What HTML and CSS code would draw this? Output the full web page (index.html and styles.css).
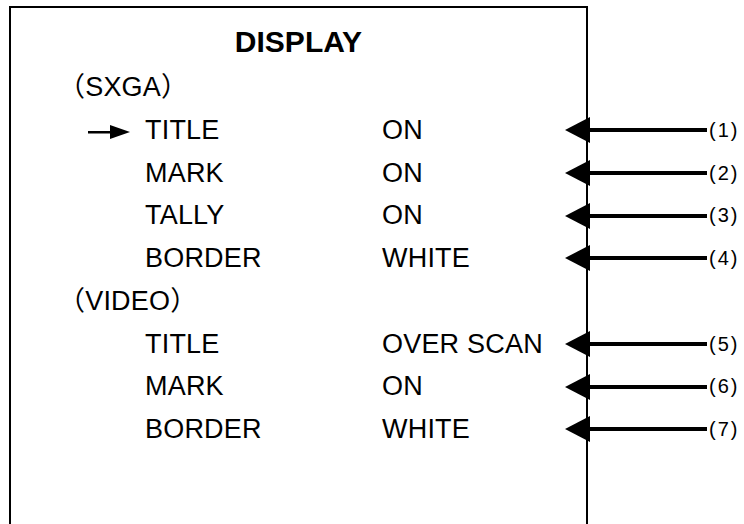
FILE: index.html
```html
<!DOCTYPE html>
<html lang="en">
<head>
    <meta charset="UTF-8">
    <title>Display Menu</title>
    <link rel="stylesheet" href="styles.css">
</head>
<body>
    <div class="panel">
        <h1 class="title">DISPLAY</h1>

        <ul class="menu">
            <li class="group">（SXGA）</li>
            <li class="row">
                <span class="marker">
                    <svg width="42" height="16" viewBox="0 0 42 16"><rect x="0" y="7" width="26" height="2.5" fill="#000"/><polygon points="22,1 42,8 22,15" fill="#000"/></svg>
                </span>
                <span class="label">TITLE</span>
                <span class="value">ON</span>
                <span class="callout"><svg width="142" height="26" viewBox="0 0 142 26"><polygon points="0,13 25,0 25,26" fill="#000"/><rect x="24" y="11" width="118" height="4" fill="#000"/></svg><span class="num">(1)</span></span>
            </li>
            <li class="row">
                <span class="marker"></span>
                <span class="label">MARK</span>
                <span class="value">ON</span>
                <span class="callout"><svg width="142" height="26" viewBox="0 0 142 26"><polygon points="0,13 25,0 25,26" fill="#000"/><rect x="24" y="11" width="118" height="4" fill="#000"/></svg><span class="num">(2)</span></span>
            </li>
            <li class="row">
                <span class="marker"></span>
                <span class="label">TALLY</span>
                <span class="value">ON</span>
                <span class="callout"><svg width="142" height="26" viewBox="0 0 142 26"><polygon points="0,13 25,0 25,26" fill="#000"/><rect x="24" y="11" width="118" height="4" fill="#000"/></svg><span class="num">(3)</span></span>
            </li>
            <li class="row">
                <span class="marker"></span>
                <span class="label">BORDER</span>
                <span class="value">WHITE</span>
                <span class="callout"><svg width="142" height="26" viewBox="0 0 142 26"><polygon points="0,13 25,0 25,26" fill="#000"/><rect x="24" y="11" width="118" height="4" fill="#000"/></svg><span class="num">(4)</span></span>
            </li>
            <li class="group">（VIDEO）</li>
            <li class="row">
                <span class="marker"></span>
                <span class="label">TITLE</span>
                <span class="value">OVER SCAN</span>
                <span class="callout"><svg width="142" height="26" viewBox="0 0 142 26"><polygon points="0,13 25,0 25,26" fill="#000"/><rect x="24" y="11" width="118" height="4" fill="#000"/></svg><span class="num">(5)</span></span>
            </li>
            <li class="row">
                <span class="marker"></span>
                <span class="label">MARK</span>
                <span class="value">ON</span>
                <span class="callout"><svg width="142" height="26" viewBox="0 0 142 26"><polygon points="0,13 25,0 25,26" fill="#000"/><rect x="24" y="11" width="118" height="4" fill="#000"/></svg><span class="num">(6)</span></span>
            </li>
            <li class="row">
                <span class="marker"></span>
                <span class="label">BORDER</span>
                <span class="value">WHITE</span>
                <span class="callout"><svg width="142" height="26" viewBox="0 0 142 26"><polygon points="0,13 25,0 25,26" fill="#000"/><rect x="24" y="11" width="118" height="4" fill="#000"/></svg><span class="num">(7)</span></span>
            </li>
        </ul>
    </div>
</body>
</html>
```

FILE: styles.css
```css
body {
    margin: 0;
    background: #ffffff;
    color: #000000;
    font-family: 'Liberation Sans', Arial, 'Noto Sans CJK JP', sans-serif;
    overflow: hidden;
}
.panel {
    box-sizing: border-box;
    width: 579px;
    height: 518px;
    margin: 6px 0 0 9px;
    border: 2px solid #000;
    border-bottom: none;
}
.title {
    margin: 0;
    padding-top: 16px;
    font-size: 30px;
    line-height: 36px;
    font-weight: bold;
    text-align: center;
}
.menu {
    list-style: none;
    margin: 6px 0 0 0;
    padding: 0;
    width: 733px;
    font-size: 27px;
    letter-spacing: 0.2px;
}
.menu li {
    height: 42.75px;
    line-height: 42.75px;
}
.group {
    padding-left: 47px;
}
.row {
    display: flex;
    align-items: center;
    padding-left: 77px;
}
.marker {
    width: 57px;
    display: flex;
    align-items: center;
    padding-top: 4px;
}
.label {
    width: 237px;
}
.value {
    width: 183px;
}
.callout {
    display: flex;
    align-items: center;
}
.callout svg {
    display: block;
}
.num {
    margin-left: 2px;
    font-size: 20px;
    letter-spacing: 2px;
}
```
